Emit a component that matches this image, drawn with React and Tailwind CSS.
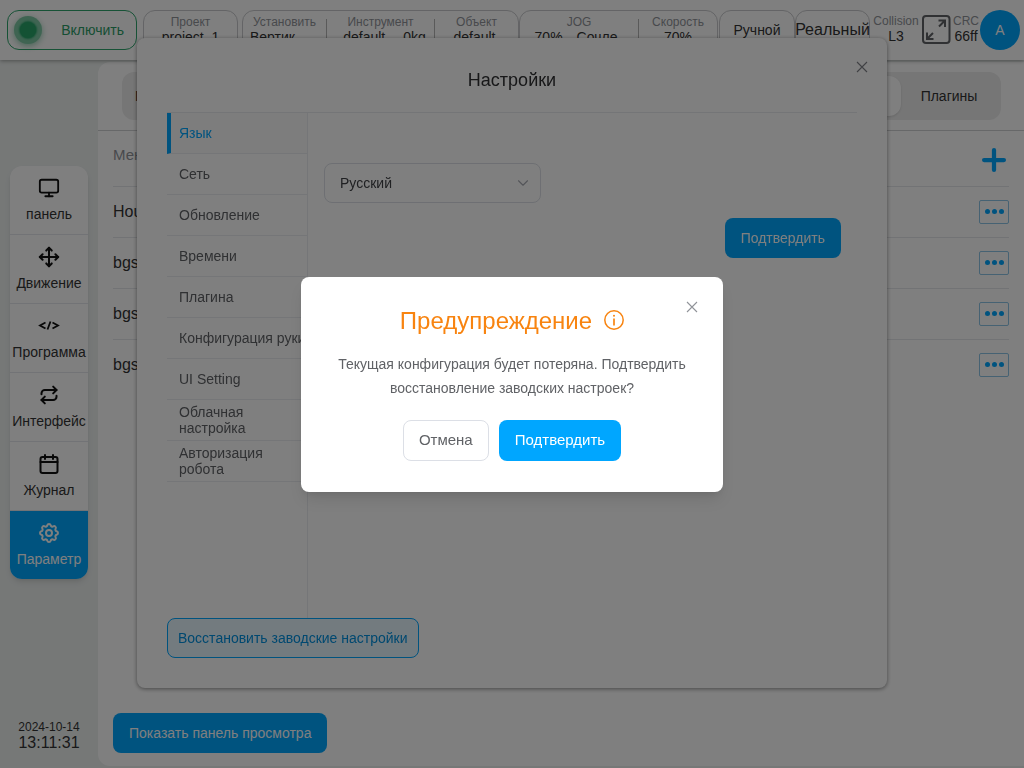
import { useState } from 'react';
import { ChevronDown, Monitor, Move, Plus, Repeat } from 'lucide-react';
import { TbSettings } from 'react-icons/tb';

const menuItems = [
    { label: 'панель', icon: <Monitor size={22} /> },
    { label: 'Движение', icon: <Move size={22} strokeWidth={2.2} /> },
    { label: 'Программа', icon: <CodeIcon /> },
    { label: 'Интерфейс', icon: <Repeat size={20} strokeWidth={2.4} /> },
    { label: 'Журнал', icon: <CalendarIcon /> },
    { label: 'Параметр', icon: <TbSettings size={24} />, active: true },
];

const settingsTabs = [
    'Язык',
    'Сеть',
    'Обновление',
    'Времени',
    'Плагина',
    'Конфигурация руки',
    'UI Setting',
    'Облачная настройка',
    'Авторизация робота',
];

const configRows = ['Hour', 'bgs1', 'bgs2', 'bgs3'];

function CodeIcon() {
    return (
        <svg width="22" height="22" viewBox="0 0 22 22" fill="none" stroke="currentColor" strokeWidth="1.8">
            <path d="M7.500 7.500 2 10.500l5.500 3M14.500 7.500l5.500 3-5.500 3M12.500 6.500l-3 8" />
        </svg>
    );
}

function CalendarIcon() {
    return (
        <svg width="20" height="22" viewBox="0 0 20 22" fill="none" stroke="currentColor" strokeWidth="2" strokeLinecap="round" strokeLinejoin="round">
            <rect x="1.500" y="4" width="17" height="16" rx="2" />
            <path d="M1.500 9h17M6 2v4M14 2v4" />
        </svg>
    );
}

function ExpandIcon() {
    return (
        <svg width="30" height="30" viewBox="0 0 30 30" fill="none" stroke="currentColor" strokeWidth="2">
            <rect x="1" y="1" width="26.500" height="27" rx="3" />
            <path d="M16.500 5.500H23V12M23 5.500l-6 6M5 17.500V24h6.500M5 24l6-6" />
        </svg>
    );
}

function CloseIcon() {
    return (
        <svg width="12" height="12" viewBox="0 0 12 12" fill="none" stroke="currentColor" strokeWidth="1.1">
            <path d="M1 1l10 10M11 1L1 11" />
        </svg>
    );
}

function InfoIcon() {
    return (
        <svg width="20" height="20" viewBox="0 0 20 20" fill="none" stroke="currentColor" strokeWidth="1.5">
            <circle cx="10" cy="10" r="9.200" />
            <path d="M10 8.500v7" strokeWidth="1.700" />
            <circle cx="10" cy="5.800" r="1" fill="currentColor" stroke="none" />
        </svg>
    );
}

function Stat({ label, children, className = '' }) {
    return (
        <div className={`flex flex-col items-center pt-[3px] whitespace-nowrap ${className}`}>
            <span className="text-xs leading-4 text-[#909399]">{label}</span>
            <span className="text-sm leading-[15px] text-[#333]">{children}</span>
        </div>
    );
}

function Header() {
    return (
        <header className="relative z-10 flex h-[60px] shrink-0 items-center bg-white pl-[7px] pr-1 shadow-[0_1px_4px_rgba(0,0,0,0.35)]">
            <button type="button" className="mr-1.5 flex h-10 w-[130px] items-center justify-between rounded-xl border border-[#2ea56c] pl-1.5 pr-3 text-sm text-[#2b9c66]">
                <span className="flex h-7 w-7 items-center justify-center rounded-full bg-[#7fc9a5] shadow-[0_2px_6px_rgba(43,156,102,0.5)]">
                    <span className="h-4 w-4 rounded-full bg-[#28a469] shadow-[0_0_2px_1px_#28a469]" />
                </span>
                Включить
            </button>
            <div className="mr-1 h-10 w-[95px] rounded-xl border border-[#c8c9cc]">
                <Stat label="Проект">project_1</Stat>
            </div>
            <div className="flex h-10 flex-1 rounded-xl border border-[#c8c9cc]">
                <div className="flex w-[83px] flex-col items-center pt-[3px]">
                    <span className="text-xs leading-4 text-[#909399]">Установить</span>
                    <span className="w-full pl-[7px] text-sm leading-[15px] text-[#333]">Вертик</span>
                </div>
                <i className="my-2 w-px bg-[#b4b4b4]" />
                <Stat label="Инструмент" className="flex-1"><span className="flex gap-[18px] pl-2"><span>default</span><span>0kg</span></span></Stat>
                <i className="my-2 w-px bg-[#b4b4b4]" />
                <Stat label="Объект" className="w-[83px]"><span className="pr-1">default</span></Stat>
            </div>
            <div className="flex h-10 w-[199px] rounded-xl border border-[#c8c9cc]">
                <Stat label="JOG" className="flex-1"><span className="flex gap-3.5 pr-1.5"><span>70%</span><span>Сочле</span></span></Stat>
                <i className="my-2 w-px bg-[#b4b4b4]" />
                <Stat label="Скорость" className="w-[78px]">70%</Stat>
            </div>
            <button type="button" className="ml-px h-10 w-[76px] rounded-xl border border-[#c8c9cc] text-sm text-[#333]">Ручной</button>
            <button type="button" className="flex h-10 w-[75px] items-center justify-center rounded-xl border border-[#c8c9cc] text-base text-[#333]">Реальный</button>
            <Stat label="Collision" className="h-10 w-[52px]">L3</Stat>
            <button type="button" aria-label="Fullscreen" className="text-[#606266]"><ExpandIcon /></button>
            <Stat label="CRC" className="h-10 w-7">66ff</Stat>
            <button type="button" className="h-10 w-10 rounded-full bg-[#00a6ff] text-sm text-white">A</button>
        </header>
    );
}

function SideMenu() {
    return (
        <aside className="flex w-[98px] shrink-0 flex-col items-center justify-between pt-[106px] pb-[17px]">
            <nav className="w-[78px] overflow-hidden rounded-xl bg-white shadow-md">
                {menuItems.map(item => (
                    <button
                        key={item.label}
                        type="button"
                        className={`flex w-full flex-col items-center gap-1 pt-2.5 text-sm ${item.active ? 'h-[68px] bg-[#00a6ff] text-white' : 'h-[69px] border-b border-[#e4e7ed] text-[#333]'}`}>
                        <span className={`flex h-6 items-center ${item.active ? '' : 'text-[#111]'}`}>{item.icon}</span>
                        <span>{item.label}</span>
                    </button>
                ))}
            </nav>
            <div className="text-center text-[#333]">
                <p className="text-xs leading-4">2024-10-14</p>
                <p className="text-base leading-4">13:11:31</p>
            </div>
        </aside>
    );
}

function ConfigPanel() {
    return (
        <main className="mt-0.5 mb-0.5 flex min-w-0 flex-1 flex-col rounded-l-xl bg-white">
            <div className="border-b border-[#cfd0d2] pt-2.5 pb-2.5 pr-[23px] pl-6">
                <div className="flex h-12 items-center rounded-xl bg-[#ededed] p-1 text-sm text-[#333]">
                    <button type="button" className="flex-1 px-[9px] text-left">Программа</button>
                    <button type="button" className="h-10 w-[200px] rounded-xl bg-white shadow">Система</button>
                    <button type="button" className="w-24">Плагины</button>
                </div>
            </div>
            <div className="flex-1 px-[15px]">
                <table className="w-full text-base text-[#333]">
                    <thead>
                        <tr className="h-[55px] border-b border-[#e4e6ea]">
                            <th className="pb-1.5 text-left text-[15px] font-normal text-[#909399]">Менеджер</th>
                            <th className="w-[30px]">
                                <button type="button" aria-label="Добавить" className="-mx-0.5 mt-1 block text-[#00a6ff]"><Plus size={34} strokeWidth={3} /></button>
                            </th>
                        </tr>
                    </thead>
                    <tbody>
                        {configRows.map(name => (
                            <tr key={name} className="h-[51px] border-b border-[#e4e6ea] last:border-0">
                                <td>{name}</td>
                                <td>
                                    <button type="button" aria-label="Действия" className="flex h-6 w-[30px] items-center justify-center gap-0.5 rounded-xs border border-[#8cc4e6]">
                                        <i className="h-[5px] w-[5px] rounded-full bg-[#00a6ff]" />
                                        <i className="h-[5px] w-[5px] rounded-full bg-[#00a6ff]" />
                                        <i className="h-[5px] w-[5px] rounded-full bg-[#00a6ff]" />
                                    </button>
                                </td>
                            </tr>
                        ))}
                    </tbody>
                </table>
            </div>
            <div className="px-[15px] pb-[13px]">
                <button type="button" className="h-10 rounded-lg bg-[#00a6ff] px-4 text-sm text-white">Показать панель просмотра</button>
            </div>
        </main>
    );
}

function SettingsModal() {
    const [tab, setTab] = useState(settingsTabs[0]);

    return (
        <div className="fixed inset-0 z-40 flex items-start justify-center pt-[38px]">
            <section aria-label="Настройки" className="relative flex h-[650px] w-full max-w-[750px] flex-col rounded-lg bg-white px-[30px] pb-[30px] shadow-[0_1px_4px_rgba(0,0,0,0.45)]">
                <button type="button" aria-label="Закрыть" className="absolute top-[23px] right-[19px] text-[#808288]"><CloseIcon /></button>
                <h2 className="flex h-[75px] shrink-0 items-center justify-center border-b border-[#e8eaee] pt-2.5 text-lg text-[#303133]">Настройки</h2>
                <div className="flex flex-1">
                    <ul className="w-[141px] shrink-0 border-r border-[#ebedf0]">
                        {settingsTabs.map(name => (
                            <li key={name}>
                                <button
                                    type="button"
                                    onClick={() => setTab(name)}
                                    className={`flex h-[41px] w-full items-center border-b border-b-[#ebedf0] text-left text-sm leading-4 ${tab === name ? 'border-l-4 border-l-[#00a6ff] bg-[#fafafa] pl-2 text-[#00a6ff]' : 'pl-3 text-[#606266]'}`}>
                                    <span className={name === 'Конфигурация руки' ? 'whitespace-nowrap' : ''}>{name}</span>
                                </button>
                            </li>
                        ))}
                    </ul>
                    <div className="flex flex-1 flex-col items-start px-4 pt-[50px]">
                        <div className="relative">
                            <select aria-label="Язык" className="h-10 w-[217px] appearance-none rounded-lg border border-[#dcdfe6] bg-white px-[15px] text-sm text-[#404246]">
                                <option>Русский</option>
                            </select>
                            <ChevronDown size={18} strokeWidth={1.5} className="pointer-events-none absolute top-[11px] right-[9px] text-[#a8abb2]" />
                        </div>
                        <button type="button" className="mt-[15px] h-10 self-end rounded-lg bg-[#00a6ff] px-4 text-sm text-white">Подтвердить</button>
                    </div>
                </div>
                <button type="button" className="h-10 self-start rounded-lg border border-[#00a6ff] bg-[#e6f6ff] px-2.5 text-sm text-[#0091e0]">Восстановить заводские настройки</button>
            </section>
        </div>
    );
}

function WarningDialog({ onClose }) {
    return (
        <div className="fixed inset-0 z-50 flex items-center justify-center bg-black/50">
            <div role="dialog" aria-modal="true" aria-labelledby="warning-title" className="relative w-full max-w-[422px] rounded-lg bg-white px-[30px] pt-[26px] pb-[31px] text-center shadow-lg">
                <button type="button" aria-label="Закрыть" onClick={onClose} className="absolute top-6 right-[25px] text-[#909399]"><CloseIcon /></button>
                <h2 id="warning-title" className="flex items-center justify-center gap-3 text-2xl text-[#f88410]">
                    <span className="pt-0.5">Предупреждение</span>
                    <InfoIcon />
                </h2>
                <p className="mt-[15px] text-sm leading-6 text-[#606266]">Текущая конфигурация будет потеряна. Подтвердить восстановление заводских настроек?</p>
                <div className="mt-5 flex justify-center gap-2.5 text-[15px]">
                    <button type="button" onClick={onClose} className="h-[41px] rounded-lg border border-[#dcdfe6] px-[15px] pt-px text-[#606266]">Отмена</button>
                    <button type="button" onClick={onClose} className="h-[41px] rounded-lg bg-[#00a6ff] px-4 pt-px text-white">Подтвердить</button>
                </div>
            </div>
        </div>
    );
}

export default function App() {
    const [warningOpen, setWarningOpen] = useState(true);

    return (
        <div className="flex h-screen flex-col bg-[#ecf0ef] font-['Liberation_Sans',Arial,sans-serif]">
            <Header />
            <div className="flex min-h-0 flex-1">
                <SideMenu />
                <ConfigPanel />
            </div>
            <SettingsModal />
            {warningOpen && <WarningDialog onClose={() => setWarningOpen(false)} />}
        </div>
    );
}
